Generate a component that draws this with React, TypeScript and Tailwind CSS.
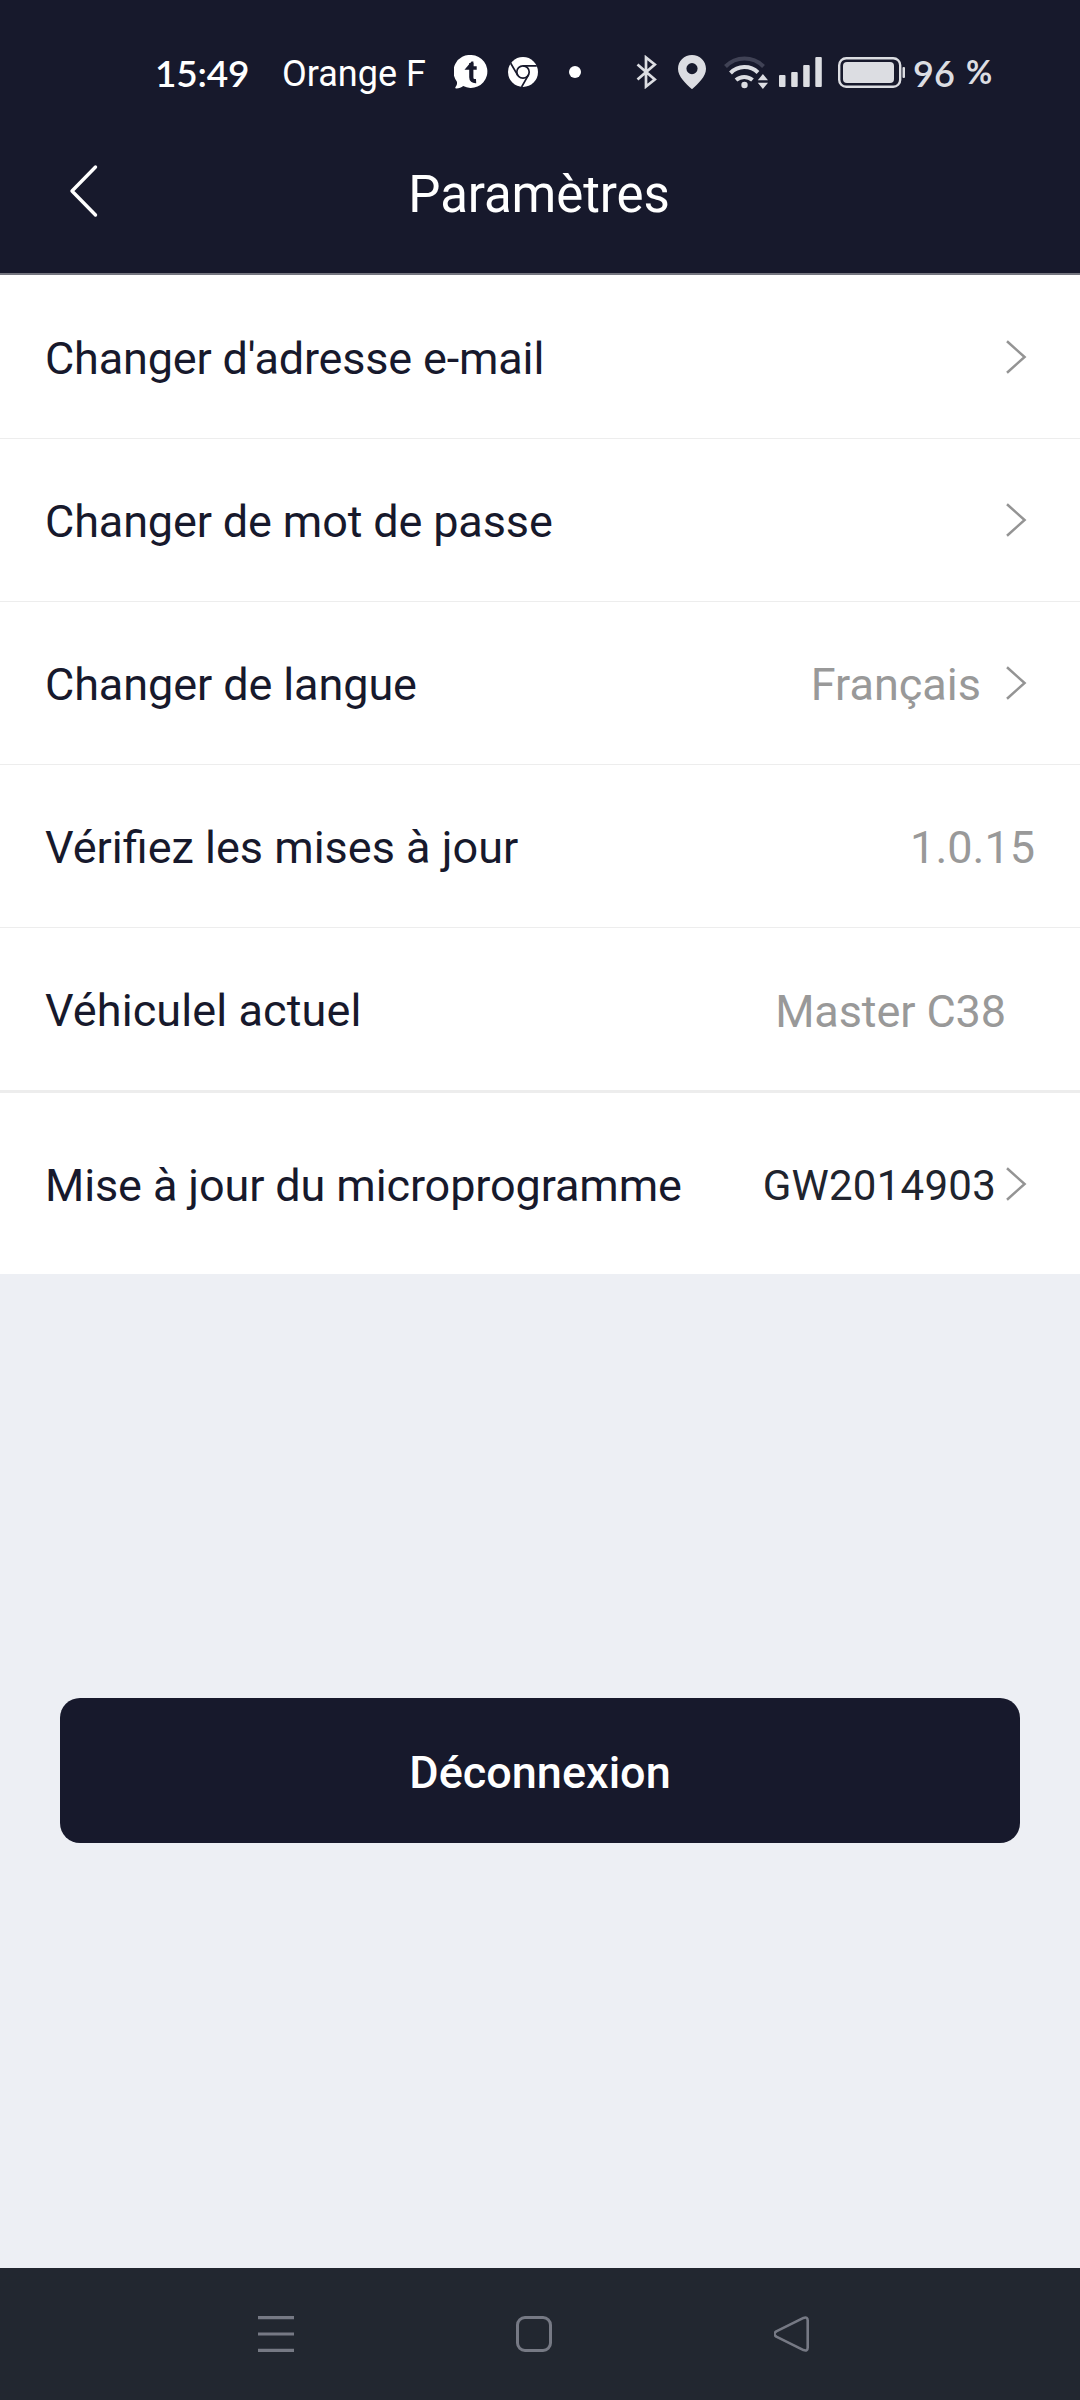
import React from 'react';

interface SettingItem {
  id: string;
  label: string;
  labelClass: string;
  value?: string;
  valueClass?: string;
  rowClass: string;
  hasArrow: boolean;
}

const SETTINGS: SettingItem[] = [
  {
    id: 'email',
    label: "Changer d'adresse e-mail",
    labelClass: 'tracking-[-0.17px]',
    rowClass: 'h-[164px] border-b',
    hasArrow: true,
  },
  {
    id: 'password',
    label: 'Changer de mot de passe',
    labelClass: 'tracking-[-0.14px]',
    rowClass: 'h-[163px] border-b',
    hasArrow: true,
  },
  {
    id: 'language',
    label: 'Changer de langue',
    labelClass: 'tracking-[-0.1px]',
    value: 'Français',
    valueClass: 'text-[45px] text-[#999999] mr-[24px]',
    rowClass: 'h-[163px] border-b',
    hasArrow: true,
  },
  {
    id: 'updates',
    label: 'Vérifiez les mises à jour',
    // keeps the fi ligature, so no tracking here
    labelClass: 'tracking-normal',
    value: '1.0.15',
    valueClass: 'text-[45px] text-[#999999] mr-[-8px]',
    rowClass: 'h-[163px] border-b',
    hasArrow: false,
  },
  {
    id: 'vehicle',
    label: 'Véhiculel actuel',
    labelClass: 'tracking-[0.1px]',
    value: 'Master C38',
    valueClass: 'text-[45px] text-[#999999] tracking-[-0.1px] mr-[21px] pt-[2px]',
    rowClass: 'h-[165px] border-b-3',
    hasArrow: false,
  },
  {
    id: 'firmware',
    label: 'Mise à jour du microprogramme',
    labelClass: 'tracking-[-0.12px]',
    value: 'GW2014903',
    valueClass: 'text-[42px] text-[#20242e] tracking-[0.25px] mr-[9px] pt-[1px]',
    rowClass: 'h-[181px]',
    hasArrow: true,
  },
];

const ArrowIcon = () => (
  <svg className="w-[22px] h-[36px]" viewBox="0 0 22 36" fill="none" stroke="#949494" strokeWidth="2.5">
    <path d="M2 2.3 19.6 18 2 33.7" />
  </svg>
);

const TalkIcon = () => (
  <svg className="w-[34px] h-[34px]" viewBox="0 0 34 34">
    <path fill="#fff" d="M17.5 0a16.5 16.5 0 1 1-8.3 31.1C7.4 32.6 5 33.5 2.5 33.5c-1.300 0-1.600-.9-.8-1.800 1.300-1.500 1.700-3.300 1.100-5.300A16.500 16.500 0 0 1 17.500 0z" />
    <path fill="none" stroke="#17192c" strokeWidth="4.2" d="M17.300 8v14.200c0 2.700 1.500 4.100 4.800 3.900" />
    <path fill="#17192c" d="M10.500 14.700 17.500 6.500h1.900v4.700h3.300v3.500z" />
  </svg>
);

const ChromeIcon = () => (
  <svg className="w-[30px] h-[30px]" viewBox="0 0 30 30">
    <circle cx="15" cy="15" r="15" fill="#fff" />
    <g fill="none" stroke="#17192c" strokeWidth="1.7">
      <circle cx="15" cy="15" r="6.2" />
      <path d="M15 8.800h13.800M9.630 18.100 2.700 6.200M20.370 18.100 13.600 30" />
    </g>
  </svg>
);

const BluetoothIcon = () => (
  <svg className="w-[22px] h-[34px]" viewBox="0 0 22 34" fill="none" stroke="#dcdde2" strokeWidth="2.7">
    <path d="M1.500 9.500 18.800 24.500 10 31.500V2.500L18.800 9.500 1.500 24.500" />
  </svg>
);

const PinIcon = () => (
  <svg className="w-[28px] h-[34px]" viewBox="0 0 28 34">
    <path
      fill="#dcdde2"
      fillRule="evenodd"
      d="M14 0c7.700 0 14 6 14 13.700C28 22 20 28.500 14 34.200 8 28.500 0 22 0 13.700 0 6 6.300 0 14 0zm0 8a5.600 5.600 0 1 0 0 11.200A5.600 5.600 0 0 0 14 8z"
    />
  </svg>
);

const WifiIcon = () => (
  <svg className="w-[44px] h-[34px]" viewBox="0 0 44 34">
    <g fill="none" strokeWidth="4">
      <path stroke="#404255" d="M1.500 11.500a26.500 26.500 0 0 1 38 0" />
      <path stroke="#dcdde2" d="M6.500 18a19.500 19.500 0 0 1 27.500-.5" />
      <path stroke="#dcdde2" d="M12 25a12.500 12.500 0 0 1 16.500 0" />
    </g>
    <circle cx="20.5" cy="30" r="3.2" fill="#dcdde2" />
    <path fill="#dcdde2" d="m38.900 19 5.100 6.300H33.800zM38.900 34l5.100-6.300H33.800z" />
  </svg>
);

const SignalIcon = () => (
  <svg className="w-[43px] h-[30px]" viewBox="0 0 43 30" fill="#dcdde2">
    <rect x="0" y="18" width="6.5" height="12" rx="1" />
    <rect x="12.2" y="15" width="6.5" height="15" rx="1" />
    <rect x="24.2" y="8" width="6.5" height="22" rx="1" />
    <rect x="36.3" y="0" width="6.5" height="30" rx="1" />
  </svg>
);

const BatteryIcon = () => (
  <svg className="w-[68px] h-[31px]" viewBox="0 0 68 31">
    <rect x="1.2" y="1.2" width="61" height="28.6" rx="7" fill="none" stroke="#dcdde2" strokeWidth="2.4" />
    <rect x="5" y="5" width="51" height="21" rx="4" fill="#dcdde2" />
    <rect x="64.5" y="10" width="2.5" height="11" rx="1" fill="#dcdde2" />
  </svg>
);

const StatusBar = () => (
  <div className="h-[109px] pt-[35px] pl-[155px] flex items-center text-white">
    <span className="w-[127px] pt-[2px] font-[Lato] font-semibold text-[37px] tracking-[-0.2px] whitespace-nowrap">15:49</span>
    <span className="w-[172px] pt-[6px] text-[36px] whitespace-nowrap">Orange F</span>
    <TalkIcon />
    <div className="ml-[20px]">
      <ChromeIcon />
    </div>
    <div className="ml-[31px] size-[12px] rounded-full bg-white" />
    <div className="ml-[55px]">
      <BluetoothIcon />
    </div>
    <div className="ml-[20px]">
      <PinIcon />
    </div>
    <div className="ml-[18px]">
      <WifiIcon />
    </div>
    <div className="ml-[11px]">
      <SignalIcon />
    </div>
    <div className="ml-[16px]">
      <BatteryIcon />
    </div>
    <span className="ml-[7px] w-[53px] pt-[4px] font-[Lato] font-semibold text-[36px] text-[#dcdde2]">96</span>
    <span className="font-[Lato] font-bold text-[32px] text-[#dcdde2]">%</span>
  </div>
);

const Header = () => (
  <header className="bg-[#17192c] border-b-2 border-[#74757f]">
    <StatusBar />
    <div className="h-[164px] px-[68px] flex items-center">
      <button className="w-[32px]">
        <svg className="w-[32px] h-[56px]" viewBox="0 0 32 56" fill="none" stroke="#fff" strokeWidth="3.4" strokeLinecap="round" strokeLinejoin="round">
          <path d="M27.500 4 4 28 27.500 52" />
        </svg>
      </button>
      <h1 className="flex-1 pt-[7px] text-center text-[51px] tracking-[-0.1px] text-white">Paramètres</h1>
      <div className="w-[34px]" />
    </div>
  </header>
);

const SettingRow: React.FC<{ item: SettingItem }> = ({ item }) => (
  <li className={`flex items-center bg-white border-[#ededed] pl-[45px] pr-[53px] ${item.rowClass}`}>
    <span className={`flex-1 pt-[4px] text-[45px] text-[#17192c] whitespace-nowrap ${item.labelClass}`}>{item.label}</span>
    {item.value && <span className={`mt-[4px] whitespace-nowrap ${item.valueClass}`}>{item.value}</span>}
    {item.hasArrow && <ArrowIcon />}
  </li>
);

const NavigationBar = () => (
  <nav className="h-[132px] bg-[#222730] pl-[258px] flex items-center">
    <svg className="w-[36px] h-[36px]" viewBox="0 0 36 36" fill="#767984">
      <path d="M0 0h36v3.200H0zM0 16.400h36v3.200H0zM0 32.800h36V36H0z" />
    </svg>
    <div className="ml-[222px] size-[36px] rounded-[9px] border-3 border-[#767984]" />
    <svg className="ml-[222px] w-[36px] h-[36px]" viewBox="0 0 36 36" fill="none" stroke="#767984" strokeWidth="2.6" strokeLinejoin="round">
      <path d="M2.300 15.400 29.500 1.900Q33.700.5 33.700 4.500v27q0 4-4.200 2.600L2.300 20.600Q-1.300 18 2.300 15.400z" />
    </svg>
  </nav>
);

export default function App() {
  return (
    <div className="w-[1080px] h-[2400px] flex flex-col bg-[#edeff4] font-[Roboto,sans-serif] leading-[1.2]">
      <Header />
      <main className="flex-1">
        <ul>
          {SETTINGS.map((item) => (
            <SettingRow key={item.id} item={item} />
          ))}
        </ul>
        <div className="px-[60px] pt-[424px]">
          <button className="w-full h-[145px] pt-[4px] rounded-[20px] bg-[#17192c] text-[45px] font-medium text-white">
            Déconnexion
          </button>
        </div>
      </main>
      <NavigationBar />
    </div>
  );
}
